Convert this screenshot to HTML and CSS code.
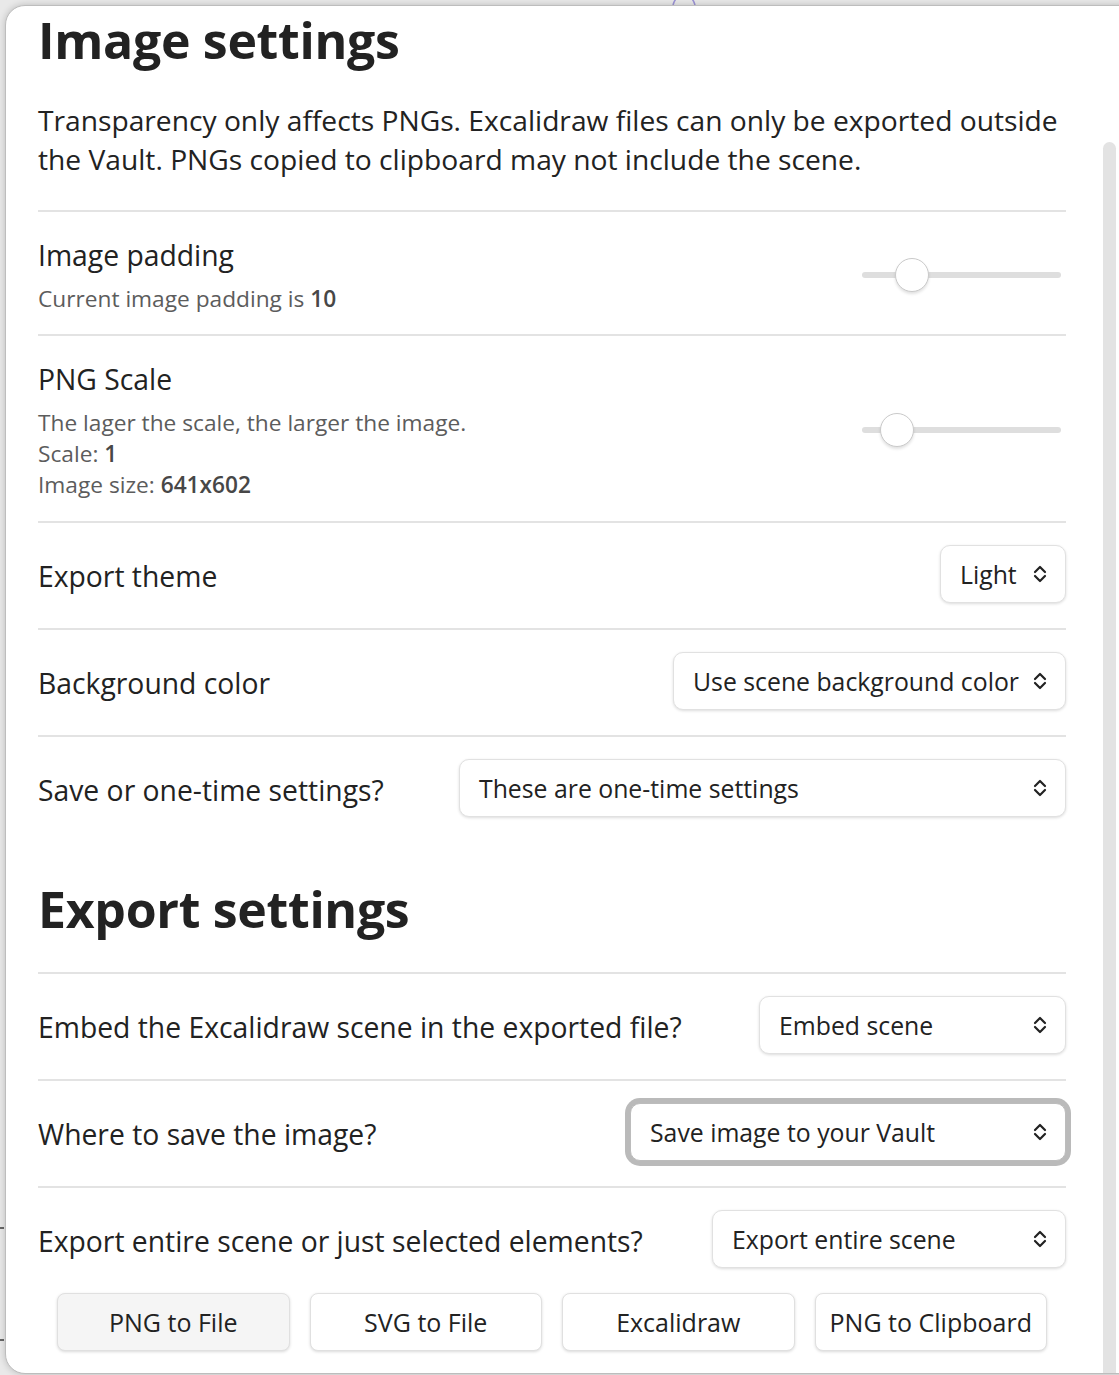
FILE: index.html
```html
<!DOCTYPE html>
<html lang="en">
<head>
<meta charset="utf-8">
<title>Export image</title>
<link rel="stylesheet" href="styles.css">
</head>
<body>
<svg class="bg-glyph" width="30" height="8" viewBox="0 0 30 8" aria-hidden="true"><path d="M4 8 C6 1, 9 0, 11 0 M19 0 C21 0, 24 1, 26 8" fill="none" stroke="#9d94d6" stroke-width="1.6"/></svg>
<span class="bg-tick bg-tick-a"></span>
<span class="bg-tick bg-tick-b"></span>

<div class="modal">
  <div class="scrollbar"></div>
  <div class="content">
    <h2 class="section-title">Image settings</h2>
    <p class="intro">Transparency only affects PNGs. Excalidraw files can only be exported outside<br>the Vault. PNGs copied to clipboard may not include the scene.</p>

    <div class="setting-item has-desc">
      <div class="info">
        <div class="name">Image padding</div>
        <div class="desc">Current image padding is <b>10</b></div>
      </div>
      <input class="slider" type="range" min="0" max="50" step="1" value="10">
    </div>

    <div class="setting-item has-desc has-desc-long">
      <div class="info">
        <div class="name">PNG Scale</div>
        <div class="desc">The lager the scale, the larger the image.<br>Scale: <b>1</b><br>Image size: <b>641x602</b></div>
      </div>
      <input class="slider" type="range" min="0.5" max="5" step="0.5" value="1">
    </div>

    <div class="setting-item">
      <div class="info"><div class="name">Export theme</div></div>
      <div class="dropdown w-light"><span>Light</span><svg class="chev" viewBox="0 0 14 18" width="14" height="18"><path d="M2 7 L7 2 L12 7 M2 11 L7 16 L12 11"/></svg></div>
    </div>

    <div class="setting-item">
      <div class="info"><div class="name">Background color</div></div>
      <div class="dropdown w-bg"><span>Use scene background color</span><svg class="chev" viewBox="0 0 14 18" width="14" height="18"><path d="M2 7 L7 2 L12 7 M2 11 L7 16 L12 11"/></svg></div>
    </div>

    <div class="setting-item">
      <div class="info"><div class="name">Save or one-time settings?</div></div>
      <div class="dropdown w-once"><span>These are one-time settings</span><svg class="chev" viewBox="0 0 14 18" width="14" height="18"><path d="M2 7 L7 2 L12 7 M2 11 L7 16 L12 11"/></svg></div>
    </div>

    <h2 class="section-title section-title-second">Export settings</h2>

    <div class="setting-item">
      <div class="info"><div class="name">Embed the Excalidraw scene in the exported file?</div></div>
      <div class="dropdown w-embed"><span>Embed scene</span><svg class="chev" viewBox="0 0 14 18" width="14" height="18"><path d="M2 7 L7 2 L12 7 M2 11 L7 16 L12 11"/></svg></div>
    </div>

    <div class="setting-item">
      <div class="info"><div class="name">Where to save the image?</div></div>
      <div class="dropdown w-where is-focused"><span>Save image to your Vault</span><svg class="chev" viewBox="0 0 14 18" width="14" height="18"><path d="M2 7 L7 2 L12 7 M2 11 L7 16 L12 11"/></svg></div>
    </div>

    <div class="setting-item">
      <div class="info"><div class="name">Export entire scene or just selected elements?</div></div>
      <div class="dropdown w-scope"><span>Export entire scene</span><svg class="chev" viewBox="0 0 14 18" width="14" height="18"><path d="M2 7 L7 2 L12 7 M2 11 L7 16 L12 11"/></svg></div>
    </div>

    <div class="actions">
      <button class="btn is-hover" type="button">PNG to File</button>
      <button class="btn" type="button">SVG to File</button>
      <button class="btn" type="button">Excalidraw</button>
      <button class="btn" type="button">PNG to Clipboard</button>
    </div>
  </div>
</div>
</body>
</html>
```

FILE: styles.css
```css
html, body {
  margin: 0;
  padding: 0;
  overflow: hidden;
}

body {
  width: 1119px;
  height: 1375px;
  position: relative;
  background: #e9e9e9;
  font-family: "Open Sans", "Noto Sans", sans-serif;
  color: #222222;
}

.bg-glyph {
  position: absolute;
  left: 669px;
  top: -3px;
}

.bg-tick {
  position: absolute;
  left: 0;
  width: 4px;
  height: 2px;
  background: #666;
}
.bg-tick-a { top: 1227px; }
.bg-tick-b { top: 1339px; }

.modal {
  position: relative;
  margin: 5px 0 0 5px;
  width: 1135px;
  box-sizing: border-box;
  background: #ffffff;
  border: 1px solid #bdbdbd;
  border-radius: 20px;
  box-shadow: 0 0 7px rgba(0, 0, 0, 0.2);
  padding: 4px 0 22px 32px;
}

.scrollbar {
  position: absolute;
  left: 1097px;
  top: 136px;
  bottom: 0;
  width: 13px;
  background: #e3e3e3;
  border-radius: 7px 7px 0 0;
}

.content {
  width: 1028px;
}

.section-title {
  margin: 0;
  font-size: 50px;
  line-height: 61px;
  font-weight: 700;
  letter-spacing: -0.3px;
  color: #222222;
}

.section-title-second {
  margin: 37px 0 32px;
}

.intro {
  margin: 30px 0 31px;
  font-size: 28.2px;
  line-height: 39px;
  white-space: nowrap;
}

.setting-item {
  display: flex;
  align-items: center;
  border-top: 2px solid #e3e3e3;
  padding: 22px 0 25px;
}

.setting-item.has-desc {
  padding: 23px 0 20px;
}

.setting-item.has-desc-long {
  padding-bottom: 21px;
}

.info {
  flex: 1 1 auto;
}

.name {
  font-size: 28.3px;
  line-height: 40px;
  white-space: nowrap;
  position: relative;
  top: 2px;
}

.has-desc .name {
  top: 0;
}

.desc {
  margin-top: 8px;
  font-size: 22.7px;
  line-height: 31px;
  color: #5c5c5c;
}

.desc b {
  font-weight: 600;
  color: #474747;
}

.slider {
  -webkit-appearance: none;
  appearance: none;
  width: 199px;
  height: 6px;
  margin: 0 5px 0 0;
  background: #dedede;
  border-radius: 3px;
  outline: none;
}

.slider::-webkit-slider-thumb {
  -webkit-appearance: none;
  appearance: none;
  box-sizing: border-box;
  width: 34px;
  height: 34px;
  border-radius: 50%;
  background: #ffffff;
  border: 1.5px solid #cacaca;
  box-shadow: 0 2px 3px rgba(0, 0, 0, 0.12);
}

.dropdown {
  flex: none;
  display: flex;
  align-items: center;
  justify-content: space-between;
  box-sizing: border-box;
  height: 58px;
  padding: 0 18px 0 19px;
  background: #ffffff;
  border: 1px solid #e1e1e1;
  border-radius: 10px;
  box-shadow: 0 1px 3px rgba(0, 0, 0, 0.14);
  font-size: 24.8px;
  white-space: nowrap;
  color: #222222;
}

.chev {
  flex: none;
  fill: none;
  stroke: #222222;
  stroke-width: 2.2;
  stroke-linecap: round;
  stroke-linejoin: round;
}

.w-light { width: 126px; }
.w-bg { width: 393px; }
.w-once { width: 607px; }
.w-embed { width: 307px; }
.w-where { width: 436px; }
.w-scope { width: 354px; }

.dropdown.is-focused {
  border-color: #bcbcbc;
  border-radius: 10px;
  box-shadow: 0 0 0 5px #bababa;
}

.actions {
  display: flex;
  gap: 20px;
  padding: 0 19px;
  margin-top: 0;
}

.btn {
  flex: 1 1 0;
  height: 58px;
  box-sizing: border-box;
  border: 1px solid #e0e0e0;
  border-radius: 8px;
  background: #ffffff;
  box-shadow: 0 1px 3px rgba(0, 0, 0, 0.15);
  font-family: inherit;
  font-size: 25px;
  color: #222222;
  padding: 0;
}

.btn.is-hover {
  background: #f5f5f5;
}
```
